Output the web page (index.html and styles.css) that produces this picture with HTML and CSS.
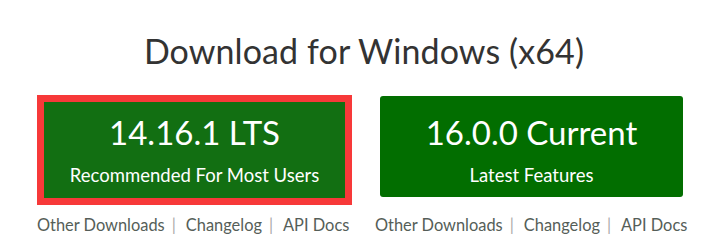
FILE: index.html
```html
<!DOCTYPE html>
<html lang="en">
<head>
  <meta charset="UTF-8">
  <meta name="viewport" content="width=device-width, initial-scale=1.0">
  <title>Download for Windows</title>
  <link rel="stylesheet" href="styles.css">
</head>
<body>
  <div class="download-page">
    <h1 class="download-title">Download for Windows (x64)</h1>
    <div class="download-grid">
      <a href="#" class="download-btn focused">
        <span class="version">14.16.1 LTS</span>
        <span class="tagline">Recommended For Most Users</span>
      </a>
      <a href="#" class="download-btn current">
        <span class="version">16.0.0 Current</span>
        <span class="tagline">Latest Features</span>
      </a>
      <!-- link rows share one grid row so they line up -->
      <ul class="download-links">
        <li><a href="#">Other Downloads</a></li>
        <li><a href="#">Changelog</a></li>
        <li><a href="#">API Docs</a></li>
      </ul>
      <ul class="download-links">
        <li><a href="#">Other Downloads</a></li>
        <li><a href="#">Changelog</a></li>
        <li><a href="#">API Docs</a></li>
      </ul>
    </div>
  </div>
</body>
</html>
```

FILE: styles.css
```css
body {
  margin: 0;
  padding: 0;
  background-color: #ffffff;
  font-family: Lato, "Noto Sans", sans-serif;
  color: #333333;
}
.download-page {
  padding-top: 29px;
}
.download-title {
  margin: 0;
  text-align: center;
  font-size: 34px;
  font-weight: 400;
  line-height: 44px;
  letter-spacing: 0.1px;
  color: #333333;
}
.download-grid {
  display: grid;
  grid-template-columns: 316px 316px;
  column-gap: 22px;
  align-items: start;
  margin-top: 22px;
  padding-left: 37px;
}
.download-btn {
  display: flex;
  flex-direction: column;
  align-items: center;
  box-sizing: border-box;
  text-decoration: none;
  color: #ffffff;
  background-color: #026e00; /* node green */
  border-radius: 3px;
}
.download-btn.focused {
  width: 315px;
  height: 110px;
  padding-top: 10px;
  background-color: #126f12; /* lighter on hover */
  border: 7px solid #f73939; /* focus ring */
  border-radius: 0;
}
.download-btn.current {
  width: 303px;
  height: 101px;
  margin: 1px 0 0 5px;
  padding-top: 16px;
}
.version {
  font-size: 33px;
  line-height: 40px;
}
.tagline {
  margin-top: 11px;
  font-size: 18.5px;
  line-height: 24px;
}
.download-links {
  display: flex;
  margin: 9px 0 0;
  padding: 0;
  list-style: none;
  font-size: 16.4px;
  line-height: 22px;
  white-space: nowrap;
}
.download-links li {
  flex: none;
}
.download-links li + li::before {
  content: '|';
  margin: 0 10px 0 7px;
  color: #aaaaaa;
}
.download-links a {
  color: #555e58;
  text-decoration: none;
}
```
